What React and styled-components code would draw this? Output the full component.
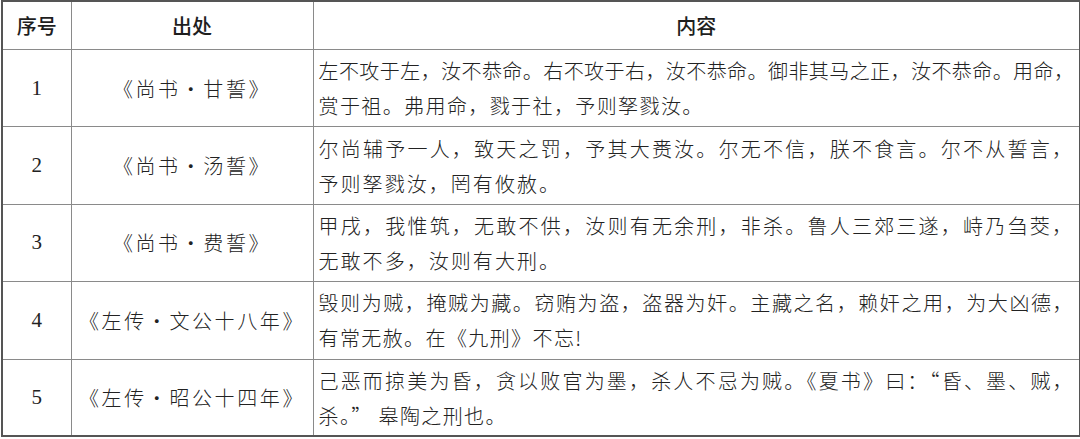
import React from "react";
import styled, { createGlobalStyle } from "styled-components";

const Global = createGlobalStyle`
  html, body { margin: 0; padding: 0; background: #ffffff; }
  body { font-family: "Liberation Serif", "Noto Sans CJK SC", serif; color: #222; }
`;

const Page = styled.div`
  padding: 0 1px;
  width: 1078px;
`;

const Table = styled.table`
  width: 1078px;
  border-collapse: collapse;
  table-layout: fixed;
  border: 2px solid #555;
`;

const HeadCell = styled.th`
  height: 47px;
  padding: 0;
  border: 1px solid #8a8a8a;
  font-family: "Noto Sans CJK SC", sans-serif;
  font-weight: 500;
  font-size: 20px;
  color: #1e1e1e;
  text-align: center;
  vertical-align: middle;
`;

const Row = styled.tr`
  height: 77.4px;
`;

const NumCell = styled.td`
  padding: 0;
  border: 1px solid #8a8a8a;
  text-align: center;
  vertical-align: middle;
  font-family: "Liberation Serif", serif;
  font-size: 21px;
  color: #222;
`;

const SourceCell = styled.td`
  padding: 0;
  border: 1px solid #8a8a8a;
  text-align: center;
  vertical-align: middle;
  font-family: "Noto Sans CJK SC", sans-serif;
  font-weight: 300;
  font-size: 20px;
  letter-spacing: 2.6px;
  color: #222;
`;

const ContentCell = styled.td`
  padding: 0 5px 0 5px;
  border: 1px solid #8a8a8a;
  vertical-align: middle;
  font-family: "Noto Sans CJK SC", sans-serif;
  font-weight: 300;
  font-size: 20px;
  line-height: 35px;
  color: #222;
`;

const Line = styled.div`
  text-align: ${(p) => (p.$full ? "justify" : "left")};
  text-align-last: ${(p) => (p.$full ? "justify" : "left")};
  letter-spacing: ${(p) => p.$spacing || "0px"};
  white-space: nowrap;
`;

const rows = [
  {
    n: "1",
    src: "《尚书·甘誓》",
    l1: "左不攻于左，汝不恭命。右不攻于右，汝不恭命。御非其马之正，汝不恭命。用命，",
    l2: "赏于祖。弗用命，戮于社，予则孥戮汝。",
    s1: "0.43px",
    s2: "1.4px",
  },
  {
    n: "2",
    src: "《尚书·汤誓》",
    l1: "尔尚辅予一人，致天之罚，予其大赉汝。尔无不信，朕不食言。尔不从誓言，",
    l2: "予则孥戮汝，罔有攸赦。",
    s1: "2.05px",
    s2: "2.05px",
  },
  {
    n: "3",
    src: "《尚书·费誓》",
    l1: "甲戌，我惟筑，无敢不供，汝则有无余刑，非杀。鲁人三郊三遂，峙乃刍茭，",
    l2: "无敢不多，汝则有大刑。",
    s1: "2.05px",
    s2: "2.05px",
  },
  {
    n: "4",
    src: "《左传·文公十八年》",
    l1: "毁则为贼，掩贼为藏。窃贿为盗，盗器为奸。主藏之名，赖奸之用，为大凶德，",
    l2: "有常无赦。在《九刑》不忘!",
    s1: "1.4px",
    s2: "1.4px",
  },
  {
    n: "5",
    src: "《左传·昭公十四年》",
    l1: "己恶而掠美为昏，贪以败官为墨，杀人不忌为贼。《夏书》曰：“昏、墨、贼，",
    l2: "杀。” 皋陶之刑也。",
    s1: "1.4px",
    s2: "1.4px",
  },
];

export default function App() {
  return (
    <Page>
      <Global />
      <Table>
        <colgroup>
          <col style={{ width: 69 }} />
          <col style={{ width: 242 }} />
          <col style={{ width: 767 }} />
        </colgroup>
        <thead>
          <tr>
            <HeadCell>序号</HeadCell>
            <HeadCell>出处</HeadCell>
            <HeadCell>内容</HeadCell>
          </tr>
        </thead>
        <tbody>
          {rows.map((r) => (
            <Row key={r.n}>
              <NumCell>{r.n}</NumCell>
              <SourceCell>{r.src}</SourceCell>
              <ContentCell>
                <Line $full $spacing={r.s1}>{r.l1}</Line>
                <Line $spacing={r.s2}>{r.l2}</Line>
              </ContentCell>
            </Row>
          ))}
        </tbody>
      </Table>
    </Page>
  );
}
